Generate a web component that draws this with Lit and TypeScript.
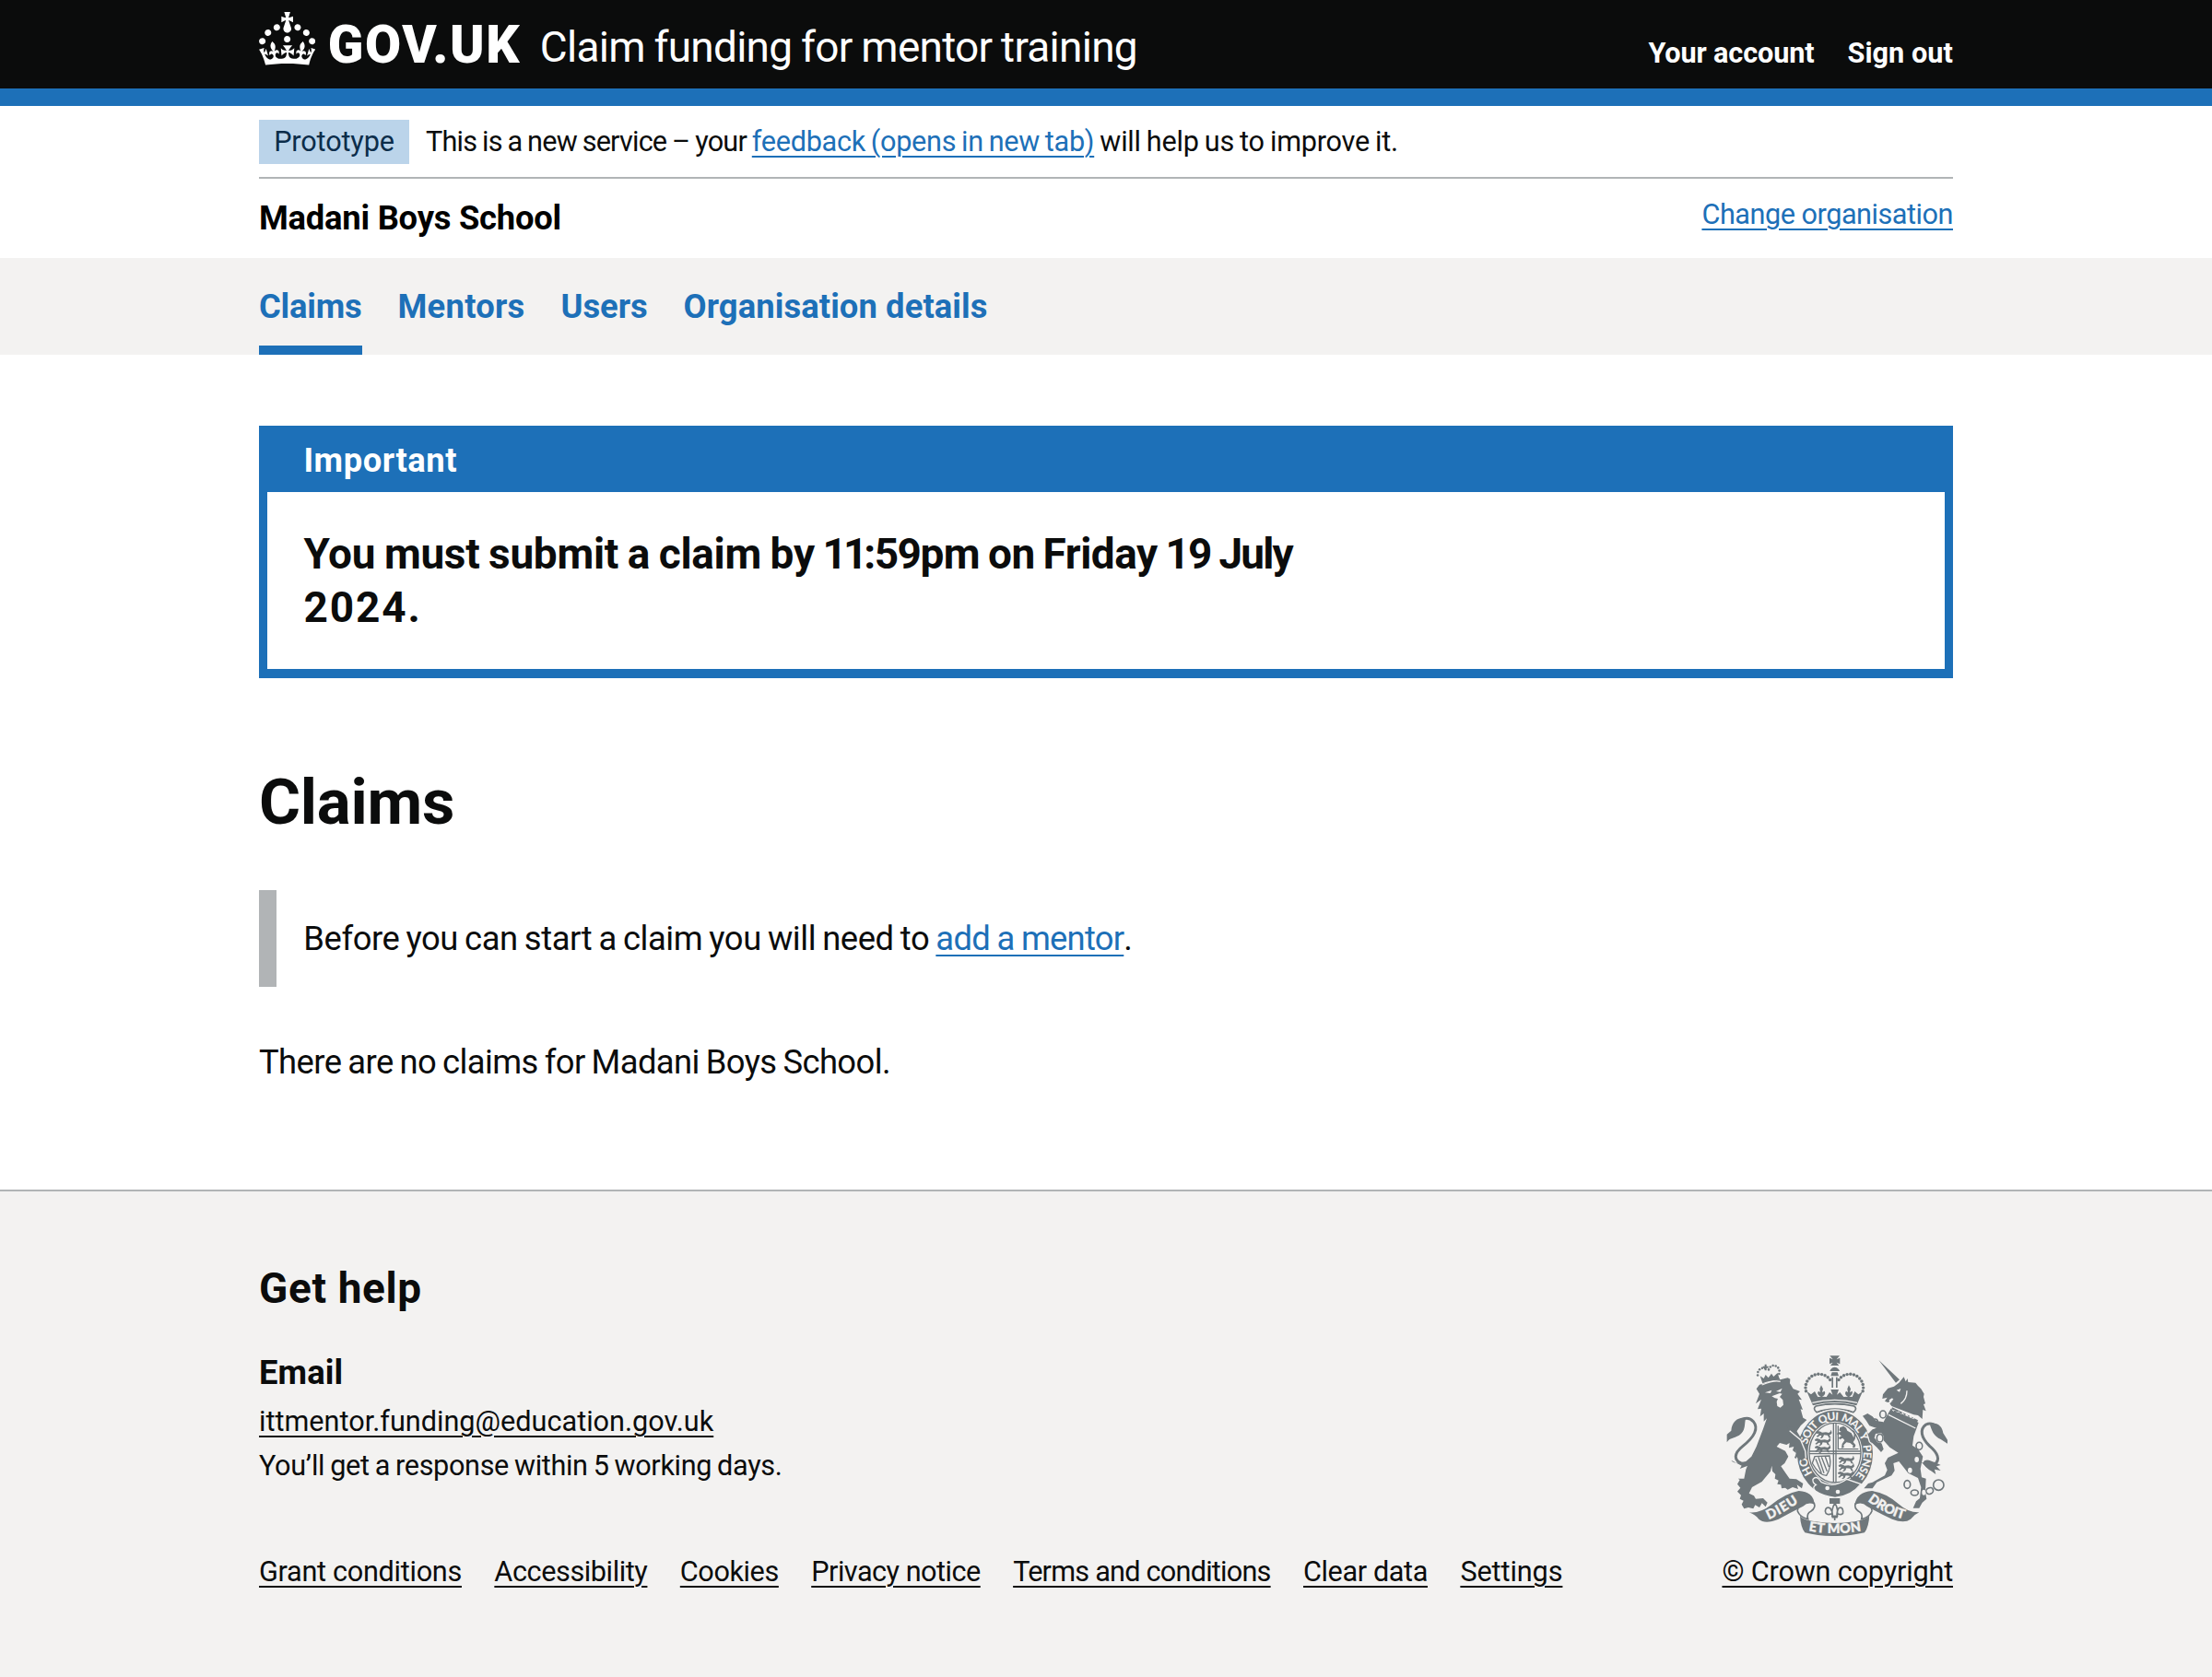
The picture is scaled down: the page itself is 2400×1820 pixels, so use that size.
import { LitElement, html, css, svg } from "lit";
import { customElement } from "lit/decorators.js";
import { classMap } from "lit/directives/class-map.js";
import { styleMap } from "lit/directives/style-map.js";

interface Item {
  label: string;
  track: number;
  current?: boolean;
}

const accountLinks: Item[] = [
  { label: "Your account", track: -0.12 },
  { label: "Sign out", track: 0.06 },
];

const sections: Item[] = [
  { label: "Claims", track: -0.2, current: true },
  { label: "Mentors", track: 0.25 },
  { label: "Users", track: -0.06 },
  { label: "Organisation details", track: 0.09 },
];

const footerLinks: Item[] = [
  { label: "Grant conditions", track: -0.29 },
  { label: "Accessibility", track: -0.41 },
  { label: "Cookies", track: -0.41 },
  { label: "Privacy notice", track: -0.51 },
  { label: "Terms and conditions", track: -0.77 },
  { label: "Clear data", track: -0.39 },
  { label: "Settings", track: -0.1 },
];

const tracking = (item: Item) => styleMap({ letterSpacing: `${item.track}px` });

/** Beads along an elliptical arc, angles in degrees. */
const beads = (cx: number, cy: number, rx: number, ry: number, from: number, to: number, n: number, r: number) =>
  Array.from({ length: n }, (_, i) => {
    const a = ((from + ((to - from) * i) / (n - 1)) * Math.PI) / 180;
    return svg`<circle cx=${cx + rx * Math.cos(a)} cy=${cy + ry * Math.sin(a)} r=${r} />`;
  });

/** One walking lion of the English quarters. */
const passant = (x: number, y: number) => svg`<path transform="translate(${x} ${y})"
  d="M0 5l7-4 8 2 5 3 12-1 10 2 6-5-2-5 4 3 2 8-5 5-3 1 2 6 4 3h-8l-4-8-12-1-3 7-5 4-6-1 5-3 1-6-6 1-6 5-5-2 6-5 2-5-7 1z" />`;

const rampant = svg`<path d="M410 268l12-5 8 6 4 9 13 8 8 15 1-15-6-11 7 4 5 12-3 15-6 9 8 10-3 9-7-1 2-7-10-8-12-2-9 9 1 8-8 2 2-14 8-12-6-7-10 5-3-6 9-6-9-6-5 3 1-8 12-2-7-5z" />`;

@customElement("gov-crown")
export class GovCrown extends LitElement {
  static styles = css`
    :host { display: block; }
    svg { display: block; width: 61.3px; height: 57.6px; fill: #fff; }
  `;
  render() {
    return html`<svg viewBox="0 0 32 30" aria-hidden="true"><path d="M22.6 10.4c-1 .4-2-.1-2.4-1-.4-.9.1-2 1-2.4.9-.4 2 .1 2.4 1s-.1 2-1 2.4m-5.9 6.7c-.9.4-2-.1-2.4-1-.4-.9.1-2 1-2.4.9-.4 2 .1 2.4 1s-.1 2-1 2.4m10.8-3.7c-1 .4-2-.1-2.4-1-.4-.9.1-2 1-2.4.9-.4 2 .1 2.4 1s0 2-1 2.4m3.3 4.8c-1 .4-2-.1-2.4-1-.4-.9.1-2 1-2.4.9-.4 2 .1 2.4 1s-.1 2-1 2.4M17 4.7l2.3 1.2V2.5l-2.3.7-.2-.2.9-3h-3.4l.9 3-.2.2c-.1.1-2.3-.7-2.3-.7v3.4L15 4.7c.1.1.1.2.2.2l-1.3 4c-.1.2-.1.4-.1.6 0 1.1.8 2 1.9 2.2h.7c1-.2 1.9-1.1 1.9-2.1 0-.2 0-.4-.1-.6l-1.3-4c-.1-.2 0-.2.1-.3m-7.6 5.7c.9.4 2-.1 2.4-1 .4-.9-.1-2-1-2.4-.9-.4-2 .1-2.4 1s0 2 1 2.4m-5 3c.9.4 2-.1 2.4-1 .4-.9-.1-2-1-2.4-.9-.4-2 .1-2.4 1s.1 2 1 2.4m-3.2 4.8c.9.4 2-.1 2.4-1 .4-.9-.1-2-1-2.4-.9-.4-2 .1-2.4 1s0 2 1 2.4m14.8 11c4.4 0 8.6.3 12.3.8 1.1-4.5 2.4-7 3.7-8.8l-2.5-.9c.2 1.3.3 1.9 0 2.7-.4-.4-.8-1.1-1.1-2.3l-1.2 4c.7-.5 1.3-.8 2-.9-1.1 2.5-2.6 3.1-3.5 3-1.1-.2-1.7-1.2-1.5-2.1.3-1.2 1.5-1.5 2.1-.1 1.1-2.3-.8-3-2-2.3 1.9-1.9 2.1-3.5.6-5.6-2.1 1.6-2.1 3.2-1.2 5.5-1.2-1.4-3.2-.6-2.5 1.6.9-1.4 2.1-.5 1.9.8-.2 1.1-1.7 2.1-3.5 1.9-2.7-.2-2.9-2.1-2.9-3.6.7-.1 1.9.5 2.9 1.9l.4-4.3c-1.1 1.1-2.1 1.4-3.2 1.4.4-1.2 2.1-3 2.1-3h-5.4s1.7 1.9 2.1 3c-1.1 0-2.1-.2-3.2-1.4l.4 4.3c1-1.4 2.2-2 2.9-1.9-.1 1.5-.2 3.4-2.9 3.6-1.9.2-3.4-.8-3.5-1.9-.2-1.3 1-2.2 1.9-.8.7-2.3-1.2-3-2.5-1.6.9-2.2.9-3.9-1.2-5.5-1.5 2-1.3 3.7.6 5.6-1.2-.7-3.1 0-2 2.3.6-1.4 1.8-1.1 2.1.1.2.9-.3 1.9-1.5 2.1-.9.2-2.4-.5-3.5-3 .6 0 1.2.3 2 .9l-1.2-4c-.3 1.1-.7 1.9-1.1 2.3-.3-.8-.2-1.4 0-2.7l-2.9.9C1.3 23 2.6 25.5 3.7 30c3.7-.5 7.9-.8 12.3-.8" /></svg>`;
  }
}

@customElement("royal-arms")
export class RoyalArms extends LitElement {
  static styles = css`
    :host { display: block; }
    svg { display: block; width: 241.67px; height: 198.33px; }
    .ink { fill: #6f777b; }
    .paper { fill: #f3f2f1; }
    .line { fill: none; stroke: #6f777b; stroke-width: 5; }
    .tail { fill: none; stroke: #6f777b; stroke-width: 9; stroke-linecap: round; }
    .thin { fill: none; stroke: #6f777b; stroke-width: 4; }
    .gap { fill: none; stroke: #f3f2f1; stroke-width: 4; }
    .edge { stroke: #f3f2f1; stroke-width: 4; }
    .words { fill: #f3f2f1; font-family: Lato, "Liberation Sans", sans-serif; font-weight: 900; }
    .garter { font-size: 36px; word-spacing: 4px; }
    .motto { font-size: 43px; stroke: #f3f2f1; stroke-width: 1.2; }
  `;
  render() {
    return html`<svg viewBox="40 30 725 595" aria-hidden="true">
      <defs>
        <path id="ring" d="M394 456 A93 106 0 0 1 394 244 A93 106 0 0 1 394 456" />
        <path id="left" d="M178 567 Q222 549 284 506" />
        <path id="mid" d="M308 604 Q393 620 486 603" />
        <path id="right" d="M500 506 Q555 550 622 567" />
      </defs>

      <!-- lion -->
      <g class="ink">
        <path class="tail" d="M100 388C58 378 66 350 94 328C132 298 146 270 128 248C112 230 88 236 72 262" />
        <path d="M104 236C76 234 58 250 56 278L42 290V316C52 298 72 304 88 288C104 272 98 254 104 236ZM56 374C66 388 84 382 104 378L122 362L128 378L110 392L84 402L90 392Z" />
        <path d="M138 142L148 128L240 106L248 110L247 124L258 142L280 150L272 158L286 178L276 176L289 210L282 208L290 236L302 243L282 262L268 282L248 272L284 302L304 344L300 364L306 370L294 378L282 368L278 374L262 366L268 352L256 342L260 330L244 334L246 318L236 324L214 318L204 330L232 344L242 362L230 384L218 394L236 420L246 434L268 436L290 450L286 466L270 454L274 468L256 462L240 470L232 464L220 466L218 454L206 452L210 440L198 434L200 420L190 410L188 392L184 410L156 444L124 462L114 482L130 490L136 500L160 498L174 512L168 526L156 514L148 528L134 520L128 532L112 528L98 532L90 518L96 506L84 500L88 488L76 476L86 464L76 452L84 438L78 434L98 434L104 404L116 374L138 330L160 272L172 238L162 248V222L150 232L154 206L142 208L154 176L136 190L148 158Z" />
        <path d="M158 124L150 100L162 108L168 96L177 106L187 92L194 102L207 90L212 106L216 113Q186 112 158 124Z" />
        <path d="M165 62h6v6h6v6h-6v8h-6v-8h-6v-6h6z" />
        ${beads(160, 94, 18, 20, 170, 290, 5, 3.8)}
        ${beads(195, 86, 18, 20, 200, 380, 7, 3.8)}
      </g>
      <path class="paper" d="M166 154L188 146L184 156ZM202 150L222 140L216 152ZM188 166L198 162L214 156L222 158L214 168L224 178L226 194L216 203L206 198L204 184L208 174L198 172Z" />
      <path class="gap" d="M156 129Q196 112 216 118" />

      <!-- crown over the garter -->
      <g class="ink">
        <path d="M377 34h32l-10 12 11-5v20l-11-5 8 10h-28l8-10-11 5V41l11 5zM380 78Q393 64 406 78L409 84H377ZM384 88h18l4 12h-26z" />
        <rect x="383" y="104" width="5" height="34" /><rect x="397" y="104" width="5" height="34" />
        ${beads(342, 138, 44, 44, 165, 325, 12, 5.2)}
        ${beads(442, 138, 44, 44, 15, -145, 12, 5.2)}
        <path d="M302 150L316 160L328 150L338 168L348 167Q332 160 340 149L346 153L344 142L349 130L355 142L352 153L360 149Q366 160 352 167L366 168L376 153L386 161L380 144H406L400 161L410 153L422 168L436 167Q422 160 430 149L436 153L434 142L439 130L445 142L442 153L450 149Q454 160 440 167L450 168L458 150L470 160L484 150L464 196Q393 176 322 196Z" />
      </g>
      <path class="line" d="M332 198Q393 184 456 198Q468 206 454 218Q393 196 334 218Q320 206 332 198Z" />
      <path class="gap" d="M320 187Q393 169 466 187" />

      <!-- unicorn -->
      <g class="ink">
        <path d="M536 48L604 112L592 122ZM586 134L602 122L618 103L624 118L630 108L632 120L656 122L664 132L674 142L684 158L682 168L688 190L682 192L690 214L680 210L678 240L664 228L650 226L578 198L572 190L582 180L566 186L556 182L564 170L548 174L550 160L566 140Z" />
        <path d="M576 206L666 252L650 296L646 326L664 338L680 362L672 402L676 430L690 434L688 478L692 500L678 512L668 530H648L658 508L670 498L674 462L664 432L632 416L618 398L602 378L584 384L588 408L578 424L530 446L516 466H488L502 450L516 446L556 424L564 406L556 384L566 366L592 354L600 350L572 332L552 310L546 290L544 262L552 250L560 234Z" />
        <path class="tail" d="M704 402C668 376 694 372 718 388C738 372 728 350 702 328C674 300 668 274 690 258C706 250 722 258 730 272" />
        <path d="M702 254C730 250 744 266 746 286L760 308V320L738 306C716 296 708 278 702 254ZM676 382L700 380L718 380L738 390L724 394L738 408L718 404L722 420L700 404Z" />
      </g>
      <path class="paper" d="M594 146l14-5-4 11zM570 178l10-6 4 4-12 10z" />
      <path class="ink" d="M572 226L580 202L664 244L656 264Z" />
      <path class="paper" d="M578 208l6 8 4-6 8 9 5-5 7 10 6-6 7 11 6-7 7 12 7-7 4 12 8-6-3 8-74-34z" />
      <path class="gap" d="M568 226L656 270" />
      <path class="gap" d="M608 190Q628 176 628 148" />
      <g class="line">
        <ellipse cx="550" cy="225" rx="10" ry="12" /><ellipse cx="524" cy="250" rx="9" ry="10" />
        <ellipse cx="668" cy="328" rx="10" ry="12" /><ellipse cx="629" cy="453" rx="10" ry="13" /><ellipse cx="653" cy="480" rx="12" ry="9" />
        <ellipse cx="702" cy="474" rx="12" ry="10" transform="rotate(-25 702 474)" /><circle cx="731" cy="455" r="17" />
      </g>
      <ellipse class="paper" cx="668" cy="328" rx="7" ry="9" />
      <ellipse class="paper" cx="660" cy="372" rx="7" ry="9" /><ellipse class="paper" cx="638" cy="407" rx="7" ry="9" /><ellipse class="paper" cx="683" cy="479" rx="6" ry="9" />

      <!-- garter and shield -->
      <ellipse class="ink edge" cx="394" cy="352" rx="125" ry="142" />
      <ellipse class="paper" cx="394" cy="350" rx="89" ry="102" />
      <ellipse class="thin" cx="394" cy="350" rx="84" ry="97" />
      <path class="thin" d="M389 254V446M397 254V446M310 345H478M310 353H478" />
      <g class="ink">
        ${passant(332, 278)}${passant(328, 302)}${passant(328, 326)}
        ${passant(405, 362)}${passant(405, 386)}${passant(403, 410)}
        ${rampant}
      </g>
      <path class="thin" d="M404 262V338H470M328 362L376 360Q384 396 366 424Q342 424 320 384ZM340 364L358 416M350 364L368 410M362 362L374 396M331 370L350 416" />
      <path class="ink edge" d="M322 436Q330 426 340 434L350 446Q392 466 432 436L478 452Q446 492 394 496Q352 490 330 474Q318 462 332 454Q320 448 322 436Z" />
      <circle class="paper" cx="369" cy="465" r="7" /><circle class="paper" cx="403" cy="477" r="7" />
      <text class="words garter"><textPath href="#ring" startOffset="86">HO</textPath></text>
      <text class="words garter"><textPath href="#ring" startOffset="183" textLength="248">SOIT QUI MAL Y</textPath></text>
      <text class="words garter"><textPath href="#ring" startOffset="444" textLength="106">PENSE</textPath></text>
      <!-- forelegs laid across the garter -->
      <path class="ink" d="M236 262L262 268L284 304L294 344L296 366L286 376L266 362L268 340Z" />
      <path class="gap" d="M246 278L282 308L297 344L299 368" />
      <path class="ink" d="M484 230L500 222L516 232L528 246L552 250L548 270L530 270L506 262L496 246ZM500 290L516 274L548 262L552 286L526 288L522 302L546 320L552 338L544 348L530 332L508 312Z" />
      <ellipse class="paper" cx="540" cy="302" rx="13" ry="16" /><ellipse class="line" cx="540" cy="302" rx="10" ry="13" />
      <path class="gap" d="M482 236L504 268L498 288L506 314L530 338" />

      <!-- ribbon -->
      <g class="ink">
        <path d="M376 498h34v18h-34z" />
        <path d="M114 544Q150 548 186 520Q232 482 276 474Q324 476 327 518Q306 508 290 524Q250 544 210 566Q166 584 146 566Q136 552 114 544Z" />
        <path d="M668 544Q634 546 600 516Q560 480 514 474Q464 478 458 520Q480 508 498 524Q540 548 580 566Q620 582 640 566Q650 552 668 544Z" />
        <path d="M280 554Q286 568 330 574Q393 584 458 574Q500 568 506 552Q504 592 490 610Q440 622 393 621Q340 622 296 610Q282 592 280 554Z" />
      </g>
      <path class="line" d="M326 514Q316 504 298 510Q268 524 272 540Q280 560 306 566Q300 548 316 540Q332 530 326 514ZM460 516Q470 504 488 510Q518 524 514 540Q506 560 480 566Q486 548 470 540Q456 530 460 516Z" />
      <path class="line" d="M386 560Q380 534 394 514Q406 534 400 560ZM384 548Q364 556 362 540Q364 524 378 530Q386 540 386 552M402 548Q422 556 420 540Q418 524 406 530Q400 540 400 552M382 556H404M393 560V570" />
      <text class="words motto"><textPath href="#left" textLength="112">DIEU</textPath></text>
      <text class="words motto"><textPath href="#mid" textLength="172">ET MON</textPath></text>
      <text class="words motto"><textPath href="#right" textLength="132">DROIT</textPath></text>
    </svg>`;
  }
}

@customElement("app-root")
export class AppRoot extends LitElement {
  static styles = css`
    :host {
      display: flex; flex-direction: column; min-height: 1820px; background: #fff; color: #0b0c0c;
      font-family: Roboto, "Liberation Sans", sans-serif; font-size: 36.38px; line-height: 47.9px;
    }
    h1, h2, h3, p { margin: 0; }
    a { color: #1d70b8; text-decoration: underline; text-decoration-thickness: 2px; text-underline-offset: 5px; }
    .wrap { margin: 0 281px; }
    .small { font-size: 30.64px; }

    .header { background: #0b0c0c; border-bottom: 19px solid #1d70b8; }
    .header-row { display: flex; align-items: flex-start; height: 96px; color: #fff; }
    .crown { margin-top: 13px; }
    .logo { margin: 19.6px 0 0 13.5px; width: 230px; font-size: 56.7px; line-height: 57px; font-weight: 900; letter-spacing: 1.6px; white-space: nowrap; }
    .service { margin-top: 23px; font-size: 45.96px; line-height: 57px; letter-spacing: -0.72px; word-spacing: -1px; }
    .account { display: flex; gap: 36px; margin: 38.5px 0 0 auto; line-height: 38px; font-weight: 700; }
    .account a { color: #fff; text-decoration: none; }

    .phase { display: flex; align-items: center; gap: 18px; height: 74.5px; padding-top: 2px; border-bottom: 2px solid #b1b4b6; white-space: pre; line-height: 38px; }
    .tag { width: 163px; height: 48px; line-height: 47px; background: #bbd4ea; color: #0c2d4a; text-align: center; letter-spacing: -0.15px; }
    .phase-text { letter-spacing: -0.8px; word-spacing: -1px; }
    .phase-text a { letter-spacing: -0.28px; word-spacing: -1.5px; }
    .phase-text .rest { letter-spacing: -0.25px; word-spacing: -1.2px; }
    .tag, .phase-text { font-weight: 400; }

    .org { display: flex; justify-content: space-between; height: 86.2px; }
    .org-name { line-height: 86px; font-weight: 700; letter-spacing: -0.24px; color: #000; }
    .org-link { margin-top: 20px; line-height: 38px; letter-spacing: -0.47px; }

    .nav { background: #f3f2f1; }
    .nav-row { display: flex; gap: 39px; }
    .nav-item { padding: 29.7px 0 17.8px; border-bottom: 10px solid transparent; color: #1d70b8; font-weight: 700; text-decoration: none; }
    .nav-item.current { border-color: #1d70b8; }

    .main { padding: 77px 0 114.3px; }
    .banner { border: 9px solid #1d70b8; border-top: 0; border-bottom-width: 10px; }
    .banner-title { background: #1d70b8; color: #fff; height: 72.4px; line-height: 75.4px; padding-left: 39.4px; font-size: 36.38px; font-weight: 700; letter-spacing: 0.55px; }
    .banner-text { padding: 38.6px 39.4px 37.8px; font-size: 45.96px; line-height: 57.6px; font-weight: 700; }
    .banner-text p { max-width: 1149px; letter-spacing: -0.3px; word-spacing: -1.4px; }
    .banner-text .when { letter-spacing: -0.45px; word-spacing: -2.2px; }
    .banner-text .ones { letter-spacing: -4px; }
    .banner-text .mins { letter-spacing: -1.5px; }
    .banner-text .day { letter-spacing: -1.8px; }
    .banner-text .month { letter-spacing: -1.8px; }
    .banner-text .year { letter-spacing: 1.9px; }
    .title { margin-top: 97.4px; font-size: 68.93px; line-height: 76.6px; letter-spacing: -0.25px; }
    .inset { margin-top: 56.2px; padding: 28.4px 29.3px 28.7px; border-left: 19px solid #b1b4b6; letter-spacing: -0.42px; word-spacing: -1.5px; }
    .inset a { letter-spacing: -0.75px; word-spacing: -0.8px; text-underline-offset: 5px; }
    .empty { margin-top: 58px; letter-spacing: -0.59px; word-spacing: -1.5px; }

    .footer { flex: 1; background: #f3f2f1; border-top: 2px solid #b1b4b6; padding-top: 76.2px; }
    .footer a { color: #0b0c0c; }
    .footer-row { display: flex; justify-content: space-between; align-items: flex-end; height: 355.8px; }
    .help { display: flex; flex-direction: column; height: 100%; }
    .help h2 { font-size: 45.96px; line-height: 57.5px; letter-spacing: 0.65px; }
    .help h3 { margin-top: 39px; font-size: 36.38px; line-height: 47.9px; letter-spacing: 0.1px; }
    .contact { margin-top: 5.4px; line-height: 48px; }
    .reply { letter-spacing: -0.35px; word-spacing: -1.2px; }
    .links { display: flex; gap: 35.4px; margin-top: auto; line-height: 38.3px; }
    .crest { display: flex; flex-direction: column; align-items: center; gap: 18.8px; line-height: 38.3px; letter-spacing: -0.18px; }
  `;

  render() {
    return html`
      <header class="header">
        <div class="header-row wrap">
          <gov-crown class="crown"></gov-crown>
          <div class="logo">GOV.UK</div>
          <div class="service">Claim funding for mentor training</div>
          <nav class="account small">${accountLinks.map((i) => html`<a style=${tracking(i)}>${i.label}</a>`)}</nav>
        </div>
      </header>

      <div class="wrap">
        <div class="phase small"><strong class="tag">Prototype</strong><span class="phase-text">This is a new service – your <a>feedback (opens in new tab)</a><span class="rest"> will help us to improve it.</span></span></div>
        <div class="org">
          <div class="org-name">Madani Boys School</div>
          <a class="org-link small">Change organisation</a>
        </div>
      </div>

      <nav class="nav">
        <div class="nav-row wrap">
          ${sections.map((i) => html`<a class=${classMap({ "nav-item": true, current: !!i.current })} style=${tracking(i)}>${i.label}</a>`)}
        </div>
      </nav>

      <main class="main wrap">
        <section class="banner">
          <h2 class="banner-title">Important</h2>
          <div class="banner-text"><p>You must submit a claim by<span class="when"> <span class="ones">11</span><span class="mins">:59</span>pm on Friday <span class="day">19</span> <span class="month">July</span></span> <span class="year">2024.</span></p></div>
        </section>
        <h1 class="title">Claims</h1>
        <div class="inset">Before you can start a claim you will need to <a>add a mentor</a>.</div>
        <p class="empty">There are no claims for Madani Boys School.</p>
      </main>

      <footer class="footer">
        <div class="footer-row wrap">
          <div class="help">
            <h2>Get help</h2>
            <h3>Email</h3>
            <div class="contact small">
              <div><a>ittmentor.funding@education.gov.uk</a></div>
              <div class="reply">You’ll get a response within 5 working days.</div>
            </div>
            <div class="links small">${footerLinks.map((i) => html`<a style=${tracking(i)}>${i.label}</a>`)}</div>
          </div>
          <div class="crest small">
            <royal-arms></royal-arms>
            <a>© Crown copyright</a>
          </div>
        </div>
      </footer>
    `;
  }
}
